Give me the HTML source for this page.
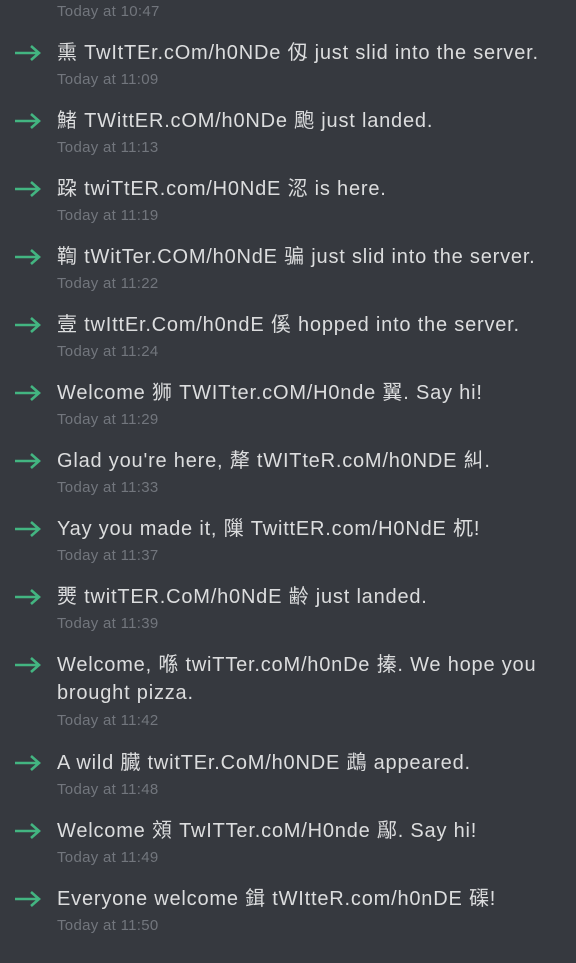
<!DOCTYPE html>
<html><head><meta charset="utf-8"><style>
html,body{margin:0;padding:0;background:#36393f;width:576px;height:963px;overflow:hidden;}
body{position:relative;font-family:"Liberation Sans","Noto Sans CJK SC",sans-serif;}
.m{position:absolute;left:57px;font-size:20px;letter-spacing:0.8px;line-height:28px;color:#dcddde;white-space:nowrap;}
.t{position:absolute;left:57px;font-size:15px;letter-spacing:0.3px;line-height:20px;color:#72767d;white-space:nowrap;}
.a{position:absolute;left:14px;width:27px;height:16px;}
</style></head><body>
<div class="t" style="top:2px">Today at 10:47</div>

<svg class="a" style="top:45px" viewBox="0 0 27 16"><path d="M1 8H25M17 1L25 8L17 15" stroke="#43b581" stroke-width="2.6" fill="none"/></svg>
<div class="m" style="top:39px">熏 TwItTEr.cOm/h0NDe 仭 just slid into the server.</div>
<div class="t" style="top:70px">Today at 11:09</div>

<svg class="a" style="top:113px" viewBox="0 0 27 16"><path d="M1 8H25M17 1L25 8L17 15" stroke="#43b581" stroke-width="2.6" fill="none"/></svg>
<div class="m" style="top:107px">鯺 TWittER.cOM/h0NDe 颮 just landed.</div>
<div class="t" style="top:138px">Today at 11:13</div>

<svg class="a" style="top:181px" viewBox="0 0 27 16"><path d="M1 8H25M17 1L25 8L17 15" stroke="#43b581" stroke-width="2.6" fill="none"/></svg>
<div class="m" style="top:175px">跥 twiTtER.com/H0NdE 涊 is here.</div>
<div class="t" style="top:206px">Today at 11:19</div>

<svg class="a" style="top:249px" viewBox="0 0 27 16"><path d="M1 8H25M17 1L25 8L17 15" stroke="#43b581" stroke-width="2.6" fill="none"/></svg>
<div class="m" style="top:243px">鞫 tWitTer.COM/h0NdE 骗 just slid into the server.</div>
<div class="t" style="top:274px">Today at 11:22</div>

<svg class="a" style="top:317px" viewBox="0 0 27 16"><path d="M1 8H25M17 1L25 8L17 15" stroke="#43b581" stroke-width="2.6" fill="none"/></svg>
<div class="m" style="top:311px">壹 twIttEr.Com/h0ndE 傒 hopped into the server.</div>
<div class="t" style="top:342px">Today at 11:24</div>

<svg class="a" style="top:385px" viewBox="0 0 27 16"><path d="M1 8H25M17 1L25 8L17 15" stroke="#43b581" stroke-width="2.6" fill="none"/></svg>
<div class="m" style="top:379px">Welcome 狮 TWITter.cOM/H0nde 翼. Say hi!</div>
<div class="t" style="top:410px">Today at 11:29</div>

<svg class="a" style="top:453px" viewBox="0 0 27 16"><path d="M1 8H25M17 1L25 8L17 15" stroke="#43b581" stroke-width="2.6" fill="none"/></svg>
<div class="m" style="top:447px">Glad you're here, 犛 tWITteR.coM/h0NDE 糾.</div>
<div class="t" style="top:478px">Today at 11:33</div>

<svg class="a" style="top:521px" viewBox="0 0 27 16"><path d="M1 8H25M17 1L25 8L17 15" stroke="#43b581" stroke-width="2.6" fill="none"/></svg>
<div class="m" style="top:515px">Yay you made it, 隟 TwittER.com/H0NdE 杌!</div>
<div class="t" style="top:546px">Today at 11:37</div>

<svg class="a" style="top:589px" viewBox="0 0 27 16"><path d="M1 8H25M17 1L25 8L17 15" stroke="#43b581" stroke-width="2.6" fill="none"/></svg>
<div class="m" style="top:583px">燛 twitTER.CoM/h0NdE 齢 just landed.</div>
<div class="t" style="top:614px">Today at 11:39</div>

<svg class="a" style="top:657px" viewBox="0 0 27 16"><path d="M1 8H25M17 1L25 8L17 15" stroke="#43b581" stroke-width="2.6" fill="none"/></svg>
<div class="m" style="top:651px">Welcome, 喺 twiTTer.coM/h0nDe 搸. We hope you<br>brought pizza.</div>
<div class="t" style="top:711px">Today at 11:42</div>

<svg class="a" style="top:755px" viewBox="0 0 27 16"><path d="M1 8H25M17 1L25 8L17 15" stroke="#43b581" stroke-width="2.6" fill="none"/></svg>
<div class="m" style="top:749px">A wild 臓 twitTEr.CoM/h0NDE 鵡 appeared.</div>
<div class="t" style="top:780px">Today at 11:48</div>

<svg class="a" style="top:823px" viewBox="0 0 27 16"><path d="M1 8H25M17 1L25 8L17 15" stroke="#43b581" stroke-width="2.6" fill="none"/></svg>
<div class="m" style="top:817px">Welcome 頝 TwITTer.coM/H0nde 鄬. Say hi!</div>
<div class="t" style="top:848px">Today at 11:49</div>

<svg class="a" style="top:891px" viewBox="0 0 27 16"><path d="M1 8H25M17 1L25 8L17 15" stroke="#43b581" stroke-width="2.6" fill="none"/></svg>
<div class="m" style="top:885px">Everyone welcome 鍓 tWItteR.com/h0nDE 磲!</div>
<div class="t" style="top:916px">Today at 11:50</div>
</body></html>
